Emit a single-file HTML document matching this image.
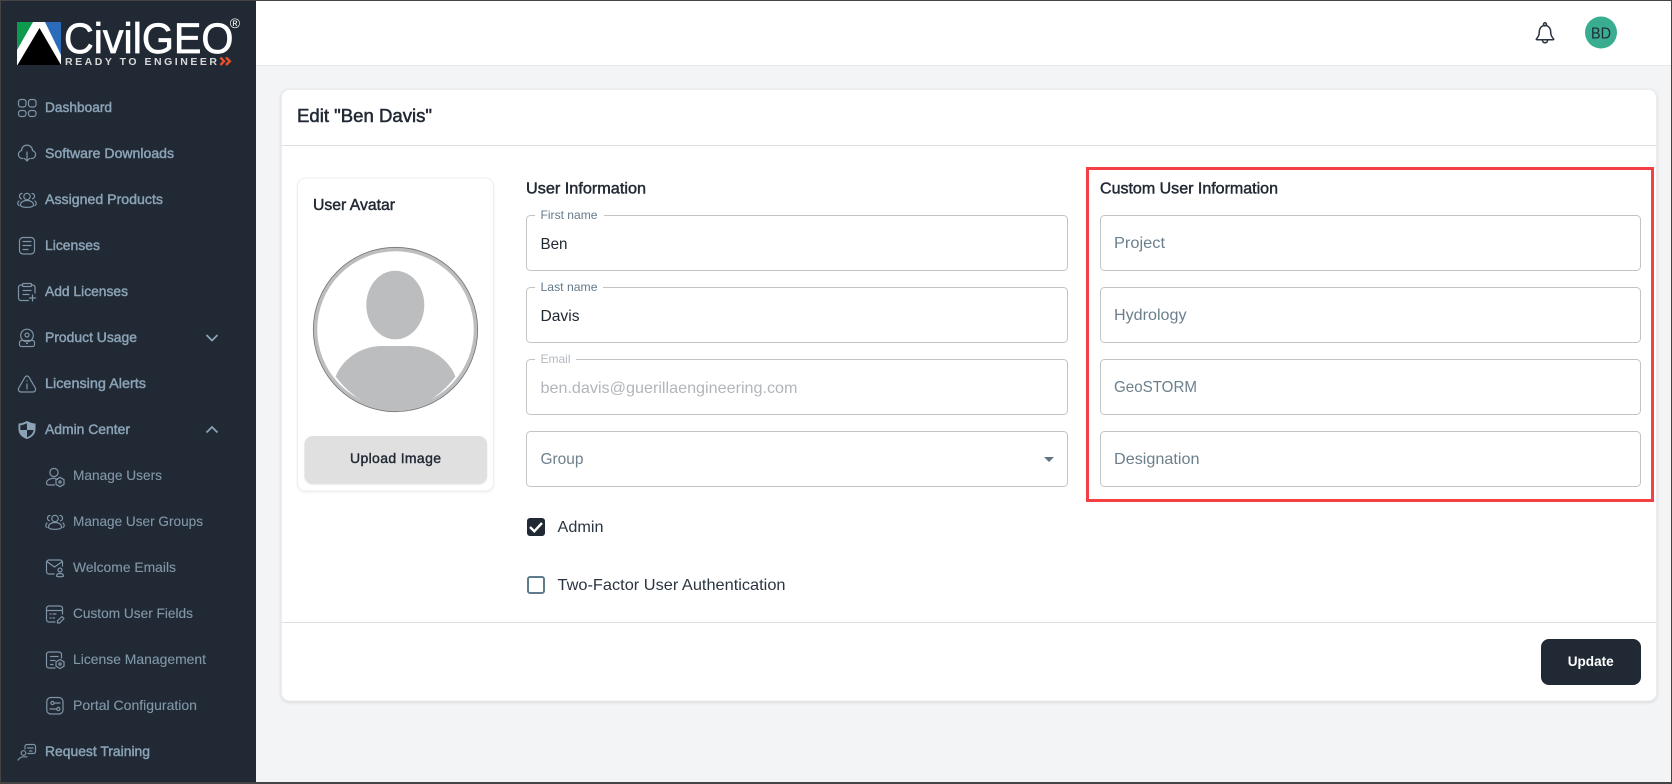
<!DOCTYPE html>
<html lang="en">
<head>
<meta charset="utf-8">
<title>Edit Ben Davis</title>
<style>
html,body{margin:0;padding:0;background:#f3f4f6;overflow:hidden}
svg{display:block}
text{font-family:"Liberation Sans",Arial,sans-serif}
</style>
</head>
<body>
<svg width="1672" height="784" viewBox="0 0 1672 784" xmlns="http://www.w3.org/2000/svg">
<rect width="1672" height="784" fill="#f3f4f6"/>
<!-- header -->
<rect x="256" y="0" width="1416" height="65" fill="#fff"/>
<rect x="256" y="65" width="1416" height="1" fill="#e6e8ec"/>
<!-- sidebar -->
<rect x="0" y="0" width="256" height="784" fill="#212934"/>

<!-- logo -->
<rect x="17" y="22" width="44" height="43" fill="#fff"/>
<polygon points="17,22 33,22 17,50" fill="#0c9a4e"/>
<polygon points="45,22 61,22 61,55" fill="#2a6cb9"/>
<polygon points="39.500,28 61,65 17.500,65" fill="#000"/>
<text x="64" y="53" font-size="43" fill="#fff" stroke="#fff" stroke-width=".7" textLength="169.500" lengthAdjust="spacingAndGlyphs">CivilGEO</text>
<text x="65" y="65" font-size="10.500" font-weight="700" fill="#d8d8d8" textLength="152" lengthAdjust="spacing">READY TO ENGINEER</text>
<path d="M220.500 57.500 L224 61.200 L220.500 65 M226 57.500 L229.800 61.200 L226 65" fill="none" stroke="#e8502a" stroke-width="2.400"/>
<text x="229.800" y="28" font-size="14" fill="#fff">®</text>

<!-- sidebar text: top level -->
<g font-size="14" fill="#8ba3b6" stroke="#8ba3b6" stroke-width=".45">
<text x="45" y="112" textLength="67" lengthAdjust="spacingAndGlyphs">Dashboard</text>
<text x="45" y="158" textLength="129" lengthAdjust="spacingAndGlyphs">Software Downloads</text>
<text x="45" y="204" textLength="118" lengthAdjust="spacingAndGlyphs">Assigned Products</text>
<text x="45" y="250" textLength="55" lengthAdjust="spacingAndGlyphs">Licenses</text>
<text x="45" y="296" textLength="83" lengthAdjust="spacingAndGlyphs">Add Licenses</text>
<text x="45" y="342" textLength="92" lengthAdjust="spacingAndGlyphs">Product Usage</text>
<text x="45" y="388" textLength="101" lengthAdjust="spacingAndGlyphs">Licensing Alerts</text>
<text x="45" y="434" textLength="85" lengthAdjust="spacingAndGlyphs">Admin Center</text>
<text x="45" y="756" textLength="105" lengthAdjust="spacingAndGlyphs">Request Training</text>
</g>
<!-- sidebar text: sub level -->
<g font-size="14" fill="#8197a8" stroke="#8197a8" stroke-width=".12">
<text x="73" y="480" textLength="89" lengthAdjust="spacingAndGlyphs">Manage Users</text>
<text x="73" y="526" textLength="130" lengthAdjust="spacingAndGlyphs">Manage User Groups</text>
<text x="73" y="572" textLength="103" lengthAdjust="spacingAndGlyphs">Welcome Emails</text>
<text x="73" y="618" textLength="120" lengthAdjust="spacingAndGlyphs">Custom User Fields</text>
<text x="73" y="664" textLength="133" lengthAdjust="spacingAndGlyphs">License Management</text>
<text x="73" y="710" textLength="124" lengthAdjust="spacingAndGlyphs">Portal Configuration</text>
</g>

<!-- sidebar icons -->
<g fill="none" stroke="#7f95a6" stroke-width="1.200" stroke-linecap="round" stroke-linejoin="round">
<!-- dashboard -->
<rect x="18.500" y="99.500" width="7.500" height="7.500" rx="2.500"/>
<rect x="28.500" y="99.500" width="7.500" height="7.500" rx="2.500"/>
<rect x="18.500" y="110.500" width="7.500" height="6" rx="2.500"/>
<rect x="28.500" y="110.500" width="7.500" height="6" rx="2.500"/>
<!-- cloud download -->
<path d="M23 158.500 H22.500 A4 4 0 0 1 21.500 150.600 A5.500 5.500 0 0 1 32.500 150.600 A4 4 0 0 1 31.500 158.500 H31"/>
<path d="M27 152 V161 M24.500 158.500 L27 161 L29.500 158.500"/>
<!-- assigned products -->
<circle cx="27" cy="196.500" r="3.200"/>
<path d="M20.500 205 C20.500 202 23.500 200.500 27 200.500 C30.500 200.500 33.500 202 33.500 205 C33.500 207 30 207.300 27 207.300 C24 207.300 20.500 207 20.500 205Z"/>
<path d="M22 193.500 A2.700 2.700 0 0 0 21.500 198.800 M32 193.500 A2.700 2.700 0 0 1 32.500 198.800 M19 201 C17.500 202 17.300 204.500 19 205.500 M35 201 C36.500 202 36.700 204.500 35 205.500"/>
<!-- licenses -->
<rect x="19.500" y="237.500" width="15" height="16.500" rx="3.500"/>
<path d="M23 241.500 H31 M23 245.500 H31 M23 249.500 H28"/>
<!-- add licenses -->
<path d="M22.500 285 H21 A2.500 2.500 0 0 0 18.500 287.500 V298 A2.500 2.500 0 0 0 21 300.500 H28.500 M31.500 285 H32.500 A2.500 2.500 0 0 1 35 287.500 V293"/>
<rect x="22.500" y="283.500" width="9" height="3" rx="1"/>
<path d="M23 290.500 H31 M23 294.500 H29 M29.500 298 H35.500 M32.500 295 V301"/>
<!-- product usage -->
<circle cx="27" cy="335.500" r="6.300"/>
<circle cx="27" cy="335" r="2"/>
<rect x="19.500" y="340.500" width="15" height="6" rx="2"/>
<path d="M26.500 343.500 H27.500"/>
<!-- alerts -->
<path d="M27 376 C28 376 28.700 376.600 29.200 377.500 L35.300 388 C36.200 389.800 35 392 33 392 H21 C19 392 17.800 389.800 18.700 388 L24.800 377.500 C25.300 376.600 26 376 27 376Z"/>
<path d="M27 384 V389 M27 380.800 V381"/>
<!-- manage users -->
<circle cx="54" cy="472.500" r="4.100"/>
<path d="M57.500 479.500 C56 478.600 55 478.300 53.500 478.300 C49.500 478.300 46.500 480.500 46.500 483 C46.500 484.500 47.500 485 49 485 H54.500"/>
<polygon points="60,477.300 64,479.700 64,484.300 60,486.700 56,484.300 56,479.700"/>
<circle cx="60" cy="482" r="1.100"/>
<!-- manage user groups -->
<g transform="translate(28,322)">
<circle cx="27" cy="196.500" r="3.200"/>
<path d="M20.500 205 C20.500 202 23.500 200.500 27 200.500 C30.500 200.500 33.500 202 33.500 205 C33.500 207 30 207.300 27 207.300 C24 207.300 20.500 207 20.500 205Z"/>
<path d="M22 193.500 A2.700 2.700 0 0 0 21.500 198.800 M32 193.500 A2.700 2.700 0 0 1 32.500 198.800 M19 201 C17.500 202 17.300 204.500 19 205.500 M35 201 C36.500 202 36.700 204.500 35 205.500"/>
</g>
<!-- welcome emails -->
<path d="M54 574 H49 A2.500 2.500 0 0 1 46.500 571.500 V562.500 A2.500 2.500 0 0 1 49 560 H60 A2.500 2.500 0 0 1 62.500 562.500 V566 M46.800 561.500 L54.500 567 L62.300 561.500"/>
<circle cx="60" cy="570" r="2"/>
<path d="M56.500 576 C56.500 574 58 573.500 60 573.500 C62 573.500 63.500 574 63.500 576 C63.500 577 56.500 577 56.500 576Z"/>
<!-- custom user fields -->
<path d="M55 622 H49 A2.500 2.500 0 0 1 46.500 619.500 V608.500 A2.500 2.500 0 0 1 49 606 H60 A2.500 2.500 0 0 1 62.500 608.500 V614 M46.500 610.500 H62.500"/>
<path d="M50 614 H51 M53 614 H56 M50 618 H51 M53 618 H54.500"/>
<path d="M57.500 620.800 L57.500 623 L59.700 623 L64 618.500 L62 616.500 Z"/>
<!-- license management -->
<path d="M55 668 H49 A2.500 2.500 0 0 1 46.500 665.500 V654.500 A2.500 2.500 0 0 1 49 652 H59 A2.500 2.500 0 0 1 61.500 654.500 V658"/>
<path d="M50.500 656.500 H58 M50.500 660.500 H55 M50.500 664.500 H53"/>
<polygon points="60,659.500 64,661.800 64,666.200 60,668.500 56,666.200 56,661.800"/>
<circle cx="60" cy="664" r="1.100"/>
<!-- portal configuration -->
<rect x="46.800" y="697.500" width="16.200" height="16.500" rx="4"/>
<circle cx="52.500" cy="703" r="1.600"/>
<circle cx="58.300" cy="709" r="1.600"/>
<path d="M54.200 703 H60 M50 709 H56.600"/>
<!-- request training -->
<path d="M25 749 V746.500 A2 2 0 0 1 27 744.500 H33.500 A2 2 0 0 1 35.500 746.500 V751.500 A2 2 0 0 1 33.500 753.500 H28"/>
<path d="M27.500 748 H33 M29.500 751 H32"/>
<circle cx="23.500" cy="753" r="2.300"/>
<path d="M18 760 C19.500 757.800 21 756.800 23.500 756.800 H27"/>
</g>
<!-- shield -->
<path fill="#8ba3b6" d="M27 421 C30 422.500 33 423.500 35.500 423.500 V429 C35.500 434 32 437.500 27 439 C22 437.500 18.500 434 18.500 429 V423.500 C21 423.500 24 422.500 27 421Z"/>
<path fill="#212934" d="M26.900 423.200 C24.500 424.400 22.300 425.100 20.300 425.300 V430 H27 Z M27 430 H33.600 C33 433.500 30.500 436 27 437.200 Z"/>
<!-- chevrons -->
<path d="M206.500 335 L212 340.500 L217.500 335" fill="none" stroke="#8ba3b6" stroke-width="1.800"/>
<path d="M206.500 432.500 L212 427 L217.500 432.500" fill="none" stroke="#8ba3b6" stroke-width="1.800"/>

<!-- header icons -->
<circle cx="1545" cy="24.300" r="1.500" fill="#fff" stroke="#2b333e" stroke-width="1.500"/>
<path d="M1545 25.500 C1541 25.500 1539.300 28.800 1539.300 32 C1539.300 35.500 1538 37 1536.500 38.700 C1536 39.300 1536.300 39.700 1537 39.700 H1553 C1553.700 39.700 1554 39.300 1553.500 38.700 C1552 37 1550.700 35.500 1550.700 32 C1550.700 28.800 1549 25.500 1545 25.500Z" fill="none" stroke="#2b333e" stroke-width="1.500" stroke-linejoin="round"/>
<path d="M1542.300 40 C1542.600 42 1543.700 42.800 1545 42.800 C1546.300 42.800 1547.400 42 1547.700 40" fill="none" stroke="#2b333e" stroke-width="1.500"/>
<circle cx="1601" cy="32.500" r="16" fill="#38ad8f"/>
<text x="1591" y="38.500" font-size="16" fill="#1f2937" textLength="20" lengthAdjust="spacingAndGlyphs">BD</text>

<!-- main card -->
<rect x="281.500" y="89.500" width="1375" height="611.500" rx="8" fill="#fff" stroke="#ececee" style="filter:drop-shadow(0 1px 1.500px rgba(0,0,0,.12))"/>
<rect x="282" y="145" width="1374" height="1" fill="#e0e0e0"/>
<rect x="282" y="622" width="1374" height="1" fill="#e0e0e0"/>
<text x="297" y="122" font-size="18" fill="#212934" stroke="#212934" stroke-width=".5" textLength="135" lengthAdjust="spacingAndGlyphs">Edit "Ben Davis"</text>

<!-- avatar card -->
<rect x="297.500" y="178" width="196" height="313" rx="8" fill="#fff" stroke="#efefef" style="filter:drop-shadow(0 1px 1px rgba(0,0,0,.07))"/>
<text x="313" y="210" font-size="16" fill="#212934" stroke="#212934" stroke-width=".45" textLength="82" lengthAdjust="spacingAndGlyphs">User Avatar</text>
<circle cx="395.500" cy="329.500" r="82" fill="#fff" stroke="#777" stroke-width="1.200"/>
<circle cx="395.500" cy="329.500" r="80" fill="none" stroke="#bcbdbf" stroke-width="3.500"/>
<ellipse cx="395.300" cy="305" rx="29" ry="34.300" fill="#bcbdbf"/>
<path d="M335.600 376.500 C344 356 364 346 382 346 H409 C427 346 447 356 455.500 376.500 C441 396 419 410 395.500 410 C372 410 350 396 335.600 376.500Z" fill="#bcbdbf"/>
<rect x="304.500" y="436" width="182.500" height="47.500" rx="8" fill="#e0e0e0" style="filter:drop-shadow(0 1px .8px rgba(0,0,0,.12))"/>
<text x="350" y="463" font-size="14" fill="#212934" stroke="#212934" stroke-width=".4" textLength="91" lengthAdjust="spacing">Upload Image</text>

<!-- section titles -->
<text x="526" y="193.500" font-size="16" fill="#212934" stroke="#212934" stroke-width=".45" textLength="120" lengthAdjust="spacingAndGlyphs">User Information</text>
<text x="1100" y="193.500" font-size="16" fill="#212934" stroke="#212934" stroke-width=".45" textLength="178" lengthAdjust="spacingAndGlyphs">Custom User Information</text>

<!-- left fields -->
<g fill="#fff" stroke="#c4c4c4">
<rect x="526.500" y="215.500" width="541" height="55" rx="4"/>
<rect x="526.500" y="287.500" width="541" height="55" rx="4"/>
<rect x="526.500" y="359.500" width="541" height="55" rx="4"/>
<rect x="526.500" y="431.500" width="541" height="55" rx="4"/>
</g>
<g fill="#fff">
<rect x="535" y="213" width="69" height="5"/>
<rect x="535" y="285" width="68" height="5"/>
<rect x="535" y="357" width="41" height="5"/>
</g>
<g font-size="12" fill="#64798a">
<text x="540.500" y="219" textLength="57" lengthAdjust="spacingAndGlyphs">First name</text>
<text x="540.500" y="291" textLength="57" lengthAdjust="spacingAndGlyphs">Last name</text>
<text x="540.500" y="363" fill="#b2bac1" textLength="30" lengthAdjust="spacingAndGlyphs">Email</text>
</g>
<g font-size="16" fill="#212934">
<text x="540.500" y="249" textLength="27" lengthAdjust="spacingAndGlyphs">Ben</text>
<text x="540.500" y="321" textLength="39" lengthAdjust="spacingAndGlyphs">Davis</text>
<text x="540.500" y="393" fill="#b0b6bb" textLength="257" lengthAdjust="spacingAndGlyphs">ben.davis@guerillaengineering.com</text>
<text x="540.500" y="464" fill="#6b7f8c" textLength="43" lengthAdjust="spacingAndGlyphs">Group</text>
</g>
<polygon points="1044,457 1054,457 1049,462" fill="#5f7482"/>

<!-- right fields -->
<g fill="#fff" stroke="#c4c4c4">
<rect x="1100.500" y="215.500" width="540" height="55" rx="4"/>
<rect x="1100.500" y="287.500" width="540" height="55" rx="4"/>
<rect x="1100.500" y="359.500" width="540" height="55" rx="4"/>
<rect x="1100.500" y="431.500" width="540" height="55" rx="4"/>
</g>
<g font-size="16" fill="#6b7f8c">
<text x="1114" y="248" textLength="51" lengthAdjust="spacingAndGlyphs">Project</text>
<text x="1114" y="320" textLength="72.500" lengthAdjust="spacingAndGlyphs">Hydrology</text>
<text x="1114" y="392" textLength="83" lengthAdjust="spacingAndGlyphs">GeoSTORM</text>
<text x="1114" y="464" textLength="85.500" lengthAdjust="spacingAndGlyphs">Designation</text>
</g>
<!-- red highlight -->
<rect x="1087.500" y="168.500" width="565" height="332" fill="none" stroke="#f44043" stroke-width="3"/>

<!-- checkboxes -->
<rect x="527" y="518" width="18" height="18" rx="3" fill="#212934"/>
<path d="M530 527 L534.300 531.300 L542 523" fill="none" stroke="#fff" stroke-width="2.400"/>
<text x="557.500" y="532" font-size="16" fill="#2b3541" textLength="46" lengthAdjust="spacingAndGlyphs">Admin</text>
<rect x="528" y="577" width="16" height="16" rx="2" fill="#fff" stroke="#5f7b8c" stroke-width="2"/>
<text x="557.500" y="590" font-size="16" fill="#2b3541" textLength="228" lengthAdjust="spacingAndGlyphs">Two-Factor User Authentication</text>

<!-- update button -->
<rect x="1541" y="639" width="100" height="46" rx="8" fill="#212934"/>
<text x="1567.700" y="666" font-size="14" font-weight="700" fill="#fff" textLength="46" lengthAdjust="spacingAndGlyphs">Update</text>

<!-- window frame -->
<rect x=".5" y=".5" width="1671" height="783" fill="none" stroke="#444"/>
<rect x="0" y="782" width="1672" height="2" fill="#444"/>
</svg>
</body>
</html>
